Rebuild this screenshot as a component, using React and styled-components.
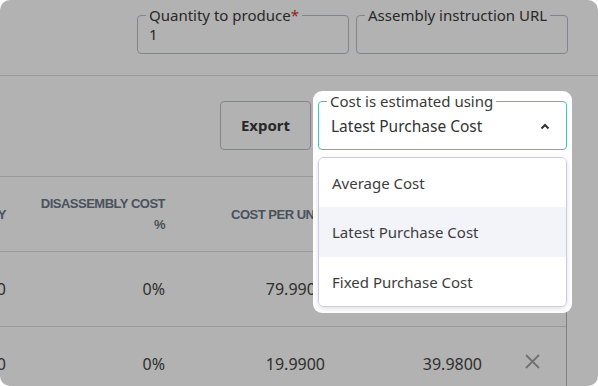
import React from 'react';
import styled, { createGlobalStyle } from 'styled-components';

const GlobalStyle = createGlobalStyle`
  body {
    margin: 0;
    background: #ffffff;
    font-family: "Noto Sans", "Liberation Sans", sans-serif;
  }
`;

// Outer modal frame, clipped so the spotlight shadow keeps the rounded corners
const Frame = styled.div`
  position: relative;
  width: 598px;
  height: 386px;
  border-radius: 10px;
  overflow: hidden;
  background: #ffffff;
  color: #444;
`;

const TopFields = styled.div`
  display: flex;
  justify-content: flex-end;
  gap: 7px;
  padding: 6px 30px 21px 0;
  border-bottom: 1px solid #dcdcdc;
`;

const Field = styled.fieldset`
  box-sizing: border-box;
  width: ${(p) => p.$width || 212}px;
  height: ${(p) => p.$height || 48}px;
  margin: 0;
  padding: 0 8px;
  border: 1px solid ${(p) => (p.$active ? '#36cab8' : '#b9c0cc')};
  border-radius: 4px;
  display: flex;
  align-items: ${(p) => (p.$active ? 'center' : 'flex-start')};
`;

const Legend = styled.legend`
  margin-left: 0;
  padding: 0 3px;
  font-size: 15px;
  line-height: 18px;
  color: #3a3a3a;
`;

const Required = styled.span`
  color: #d93025;
`;

const Value = styled.div`
  padding: 1px 3px 0;
  font-size: 15px;
  line-height: 18px;
  color: #3a3a3a;
  flex: 1;
`;

const Toolbar = styled.div`
  display: flex;
  justify-content: flex-end;
  align-items: flex-end;
  gap: 7px;
  padding: 16px 31px 26px 0;
`;

const ExportButton = styled.button`
  box-sizing: border-box;
  width: 91px;
  height: 49px;
  padding-bottom: 2px;
  border: 1px solid #b9c0cc;
  border-radius: 4px;
  background: transparent;
  font-family: inherit;
  font-size: 15px;
  font-weight: 700;
  color: #3a3a3a;
`;

const SelectWrap = styled.div`
  position: relative;
  z-index: 2;
`;

// White cut-out of the tour overlay; its spread shadow dims the rest of the page
const Spotlight = styled.div`
  position: absolute;
  top: -1px;
  left: -5px;
  right: -5px;
  height: 222px;
  z-index: -1;
  background: #ffffff;
  border-radius: 9px;
  box-shadow: 0 0 0 2000px rgba(0, 0, 0, 0.3);
`;

const SelectValue = styled.div`
  flex: 1;
  padding: 0 3px 7px 4px;
  font-size: 15.5px;
  line-height: 18px;
  color: #333;
`;

const Caret = styled.svg`
  margin-right: 8px;
  margin-bottom: 7px;
`;

const Menu = styled.ul`
  position: absolute;
  top: calc(100% + 7px);
  left: 0;
  right: 0;
  margin: 0;
  padding: 0;
  list-style: none;
  background: #ffffff;
  border: 1px solid #cbcddf;
  border-radius: 6px;
  box-shadow: 0 2px 5px rgba(0, 0, 0, 0.12);
  overflow: hidden;
`;

const MenuItem = styled.li`
  height: ${(p) => (p.$selected ? 50 : 49)}px;
  display: flex;
  align-items: center;
  padding-left: 13px;
  font-size: 15px;
  color: #3d3d3d;
  background: ${(p) => (p.$selected ? '#f3f4f9' : '#ffffff')};
`;

const TableWrap = styled.div`
  margin-right: 31px;
  border-right: 1px solid #b8b8b8;
  overflow: hidden;
`;

const Table = styled.table`
  margin-left: -74px;
  width: 641px;
  table-layout: fixed;
  border-collapse: collapse;
`;

const HeadCell = styled.th`
  height: 74px;
  padding: 0 16px;
  border-top: 1px solid #dcdcdc;
  border-bottom: 1px solid #dcdcdc;
  text-align: right;
  font-family: "Liberation Sans", Arial, sans-serif;
  font-size: 13px;
  line-height: 21px;
  font-weight: 700;
  letter-spacing: -0.5px;
  color: #6a7489;
`;

const Cell = styled.td`
  height: 74px;
  padding: 0 16px;
  border-bottom: 1px solid #dcdcdc;
  text-align: ${(p) => p.$align || 'right'};
  font-size: 16px;
  color: #444;
`;

const rows = [
  { qty: '0', pct: '0%', unit: '79.9900', total: '159.9800' },
  { qty: '0', pct: '0%', unit: '19.9900', total: '39.9800' },
];

const options = ['Average Cost', 'Latest Purchase Cost', 'Fixed Purchase Cost'];

const RemoveIcon = () => (
  <svg width="17" height="17" viewBox="0 0 17 17">
    <path d="M2 2 L15 15 M15 2 L2 15" stroke="#a3a3a3" strokeWidth="1.8" fill="none" />
  </svg>
);

const App = () => {
  return (
    <Frame>
      <GlobalStyle />
      {/* Production fields */}
      <TopFields>
        <Field>
          <Legend>
            Quantity to produce<Required>*</Required>
          </Legend>
          <Value>1</Value>
        </Field>
        <Field>
          <Legend>Assembly instruction URL</Legend>
          <Value />
        </Field>
      </TopFields>

      <Toolbar>
        <ExportButton>Export</ExportButton>
        <SelectWrap>
          <Spotlight />
          <Field $active $width={249} $height={58}>
            <Legend>Cost is estimated using</Legend>
            <SelectValue>Latest Purchase Cost</SelectValue>
            <Caret width="10" height="7" viewBox="0 0 10 7">
              <path d="M1.5 5.5 L5 2 L8.5 5.5" stroke="#333" strokeWidth="2" fill="none" />
            </Caret>
          </Field>
          <Menu>
            {options.map((o) => (
              <MenuItem key={o} $selected={o === 'Latest Purchase Cost'}>
                {o}
              </MenuItem>
            ))}
          </Menu>
        </SelectWrap>
      </Toolbar>

      {/* Ingredients table, scrolled to the right */}
      <TableWrap>
        <Table>
          <colgroup>
            <col style={{ width: 96 }} />
            <col style={{ width: 159 }} />
            <col style={{ width: 160 }} />
            <col style={{ width: 157 }} />
            <col style={{ width: 69 }} />
          </colgroup>
          <thead>
            <tr>
              <HeadCell>QUANTITY</HeadCell>
              <HeadCell>DISASSEMBLY COST %</HeadCell>
              <HeadCell>COST PER UNIT</HeadCell>
              <HeadCell>TOTAL COST</HeadCell>
              <HeadCell />
            </tr>
          </thead>
          <tbody>
            {rows.map((r, i) => (
              <tr key={i}>
                <Cell>{r.qty}</Cell>
                <Cell>{r.pct}</Cell>
                <Cell>{r.unit}</Cell>
                <Cell>{r.total}</Cell>
                <Cell $align="center">
                  <RemoveIcon />
                </Cell>
              </tr>
            ))}
          </tbody>
        </Table>
      </TableWrap>
    </Frame>
  );
};

export default App;
